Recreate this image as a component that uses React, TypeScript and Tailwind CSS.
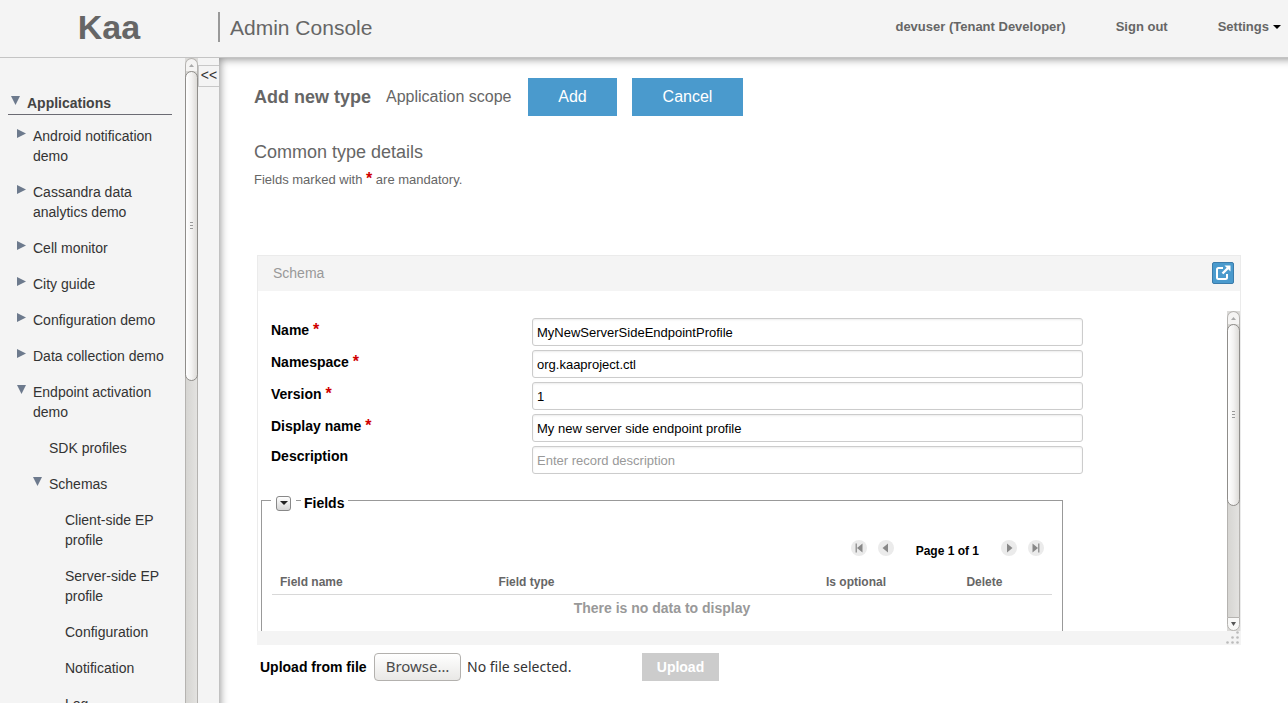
import { useRef } from "react";

type Arrow = "down" | "right" | "up" | "left";

const POINTS: Record<Arrow, string> = {
  down: "0,0 9,0 4.5,9",
  right: "0,0 9,4.5 0,9",
  up: "0,9 9,9 4.5,0",
  left: "9,0 9,9 0,4.5",
};

function Triangle({ dir, className }: { dir: Arrow; className: string }) {
  return (
    <svg viewBox="0 0 9 9" preserveAspectRatio="none" className={className} aria-hidden="true">
      <polygon points={POINTS[dir]} fill="currentColor" />
    </svg>
  );
}

type Node = { label: string; level: 1 | 2 | 3; arrow?: "down" | "right" };

const NODES: Node[] = [
  { label: "Android notification demo", level: 1, arrow: "right" },
  { label: "Cassandra data analytics demo", level: 1, arrow: "right" },
  { label: "Cell monitor", level: 1, arrow: "right" },
  { label: "City guide", level: 1, arrow: "right" },
  { label: "Configuration demo", level: 1, arrow: "right" },
  { label: "Data collection demo", level: 1, arrow: "right" },
  { label: "Endpoint activation demo", level: 1, arrow: "down" },
  { label: "SDK profiles", level: 2 },
  { label: "Schemas", level: 2, arrow: "down" },
  { label: "Client-side EP profile", level: 3 },
  { label: "Server-side EP profile", level: 3 },
  { label: "Configuration", level: 3 },
  { label: "Notification", level: 3 },
  { label: "Log", level: 3 },
];

const INDENT = { 1: "pl-[17px]", 2: "pl-[33px]", 3: "pl-[49px]" };

function TreeRow({ node }: { node: Node }) {
  return (
    <li className={`flex py-2 pr-4 ${INDENT[node.level]}`}>
      <div className="w-4 shrink-0">
        {node.arrow && (
          <button type="button" aria-label={`Toggle ${node.label}`} className="block pt-[3px] text-[#6d7a8d]">
            <Triangle dir={node.arrow} className="size-[9px]" />
          </button>
        )}
      </div>
      <a href="#" className="text-sm text-[#333]">
        {node.label}
      </a>
    </li>
  );
}

function ScrollBar({ thumb, end }: { thumb: string; end?: boolean }) {
  return (
    <div className="flex w-[13px] shrink-0 flex-col bg-[#dcdbd9]" aria-hidden="true">
      <div className="flex h-[13px] items-center justify-center rounded-t-full border border-b-0 border-[#b5b3b0] bg-[#f5f4f3] text-[#aaa]">
        <Triangle dir="up" className="h-[3px] w-[5px]" />
      </div>
      <div className="min-h-0 flex-1 border-x border-[#b5b3b0] bg-linear-to-r from-[#d6d5d2] to-[#e3e2e0]">
        <div
          className={`-mx-px flex flex-col items-center justify-center gap-[2px] rounded-full border border-[#8f8d8a] bg-linear-to-r from-white via-[#f3f2f1] to-[#dddbd8] ${thumb}`}
        >
          <div className="h-px w-[3px] bg-[#999]" />
          <div className="h-px w-[3px] bg-[#999]" />
          <div className="h-px w-[3px] bg-[#999]" />
        </div>
      </div>
      {end && (
        <div className="flex h-[14px] items-center justify-center rounded-b-full border border-[#b5b3b0] bg-[#f8f8f7] text-[#555]">
          <Triangle dir="down" className="h-1 w-[5px]" />
        </div>
      )}
    </div>
  );
}

function Star() {
  return <span className="text-base leading-4 font-bold text-[#d00000]">*</span>;
}

type Field = { id: string; label: string; value?: string; placeholder?: string; required?: boolean };

const FIELDS: Field[] = [
  { id: "name", label: "Name", value: "MyNewServerSideEndpointProfile", required: true },
  { id: "namespace", label: "Namespace", value: "org.kaaproject.ctl", required: true },
  { id: "version", label: "Version", value: "1", required: true },
  { id: "display-name", label: "Display name", value: "My new server side endpoint profile", required: true },
  { id: "description", label: "Description", placeholder: "Enter record description" },
];

function PagerButton({ label, dir, bar }: { label: string; dir: "left" | "right"; bar?: boolean }) {
  return (
    <button type="button" aria-label={label} className="rounded-full">
      <svg viewBox="0 0 16 16" className="size-4">
        <circle cx="8" cy="8" r="8" fill="#ebebeb" />
        {dir === "left" && <polygon points={bar ? "11.5,3.5 11.5,12.5 6,8" : "10,3.5 10,12.5 4.5,8"} fill="#888" />}
        {dir === "right" && <polygon points={bar ? "4.5,3.5 4.5,12.5 10,8" : "6,3.5 6,12.5 11.5,8"} fill="#888" />}
        {bar && <rect x={dir === "left" ? 4.5 : 10} y="3.5" width="1.5" height="9" fill="#999" />}
      </svg>
    </button>
  );
}

function FieldsTable() {
  return (
    <table className="w-full table-fixed border-collapse">
      <thead>
        <tr className="h-[23px] border-b border-[#d8d8d8] text-left text-xs text-[#666]">
          <th className="w-[28%] px-2">Field name</th>
          <th className="w-[42%] px-2">Field type</th>
          <th className="w-[18%] px-2">Is optional</th>
          <th className="px-2">Delete</th>
        </tr>
      </thead>
      <tbody>
        <tr>
          <td colSpan={4} className="pt-[3px] text-center text-sm font-bold text-[#999]">
            There is no data to display
          </td>
        </tr>
      </tbody>
    </table>
  );
}

function SchemaPanel() {
  return (
    <section className="mr-[47px] ml-[3px] border-x border-t border-[#ebebeb]">
      <header className="flex h-[35px] items-center justify-between bg-[#f4f4f4] pr-[6px] pb-[2px] pl-[15px]">
        <h3 className="text-sm text-[#999]">Schema</h3>
        <button
          type="button"
          aria-label="Full screen"
          className="flex size-[22px] items-center justify-center rounded-[2px] border border-[#3b7cab] bg-[#4a9acd]"
        >
          <svg viewBox="0 0 16 16" className="size-4" fill="none" stroke="#fff" strokeWidth="2">
            <path d="M8 3H3.500Q2 3 2 4.500V12.500Q2 14 3.500 14H10.500Q12 14 12 12.500V9" />
            <path d="M7.500 8.500L13 3" strokeWidth="2.400" />
            <path d="M9.500 0.500H15.500V6.500Z" fill="#fff" stroke="none" />
          </svg>
        </button>
      </header>
      <div className="flex h-[340px] pt-5">
        <div className="min-w-0 flex-1 overflow-hidden pt-[7px] pl-[3px]">
          <div className="flex flex-col gap-1 pl-[10px]">
            {FIELDS.map((f) => (
              <div key={f.id} className="flex">
                <label
                  htmlFor={f.id}
                  className={`w-[261px] shrink-0 text-sm font-bold text-black ${f.required ? "pt-[2px]" : ""}`}
                >
                  {f.label} {f.required && <Star />}
                </label>
                <input
                  id={f.id}
                  type="text"
                  defaultValue={f.value}
                  placeholder={f.placeholder}
                  className="h-7 w-full max-w-[551px] rounded-[3px] border border-[#ccc] bg-white px-1 text-[13px] text-black shadow-[inset_0_1px_2px_rgba(0,0,0,0.08)] placeholder:text-[#999]"
                />
              </div>
            ))}
          </div>
          <fieldset className="mt-4 h-60 w-full max-w-[802px] border border-[#999] px-[10px]">
            <legend className="-ml-px flex h-5 items-center bg-white pt-[6px] pr-[4px] pl-[5px] text-sm leading-[14px] font-bold text-black">
              <button
                type="button"
                aria-label="Toggle fields"
                className="flex size-[15px] items-center justify-center rounded-[3px] border border-[#888] bg-linear-to-b from-white to-[#d5d5d5] text-[#222]"
              >
                <Triangle dir="down" className="h-1 w-2" />
              </button>
              <span className="mt-1 mr-[3px] ml-[5px] w-[5px] self-start border-t border-[#999]" />
              Fields
            </legend>
            <div className="flex items-center justify-end pt-[27px] pr-2 pb-3">
              <div className="flex gap-[11px]">
                <PagerButton label="First page" dir="left" bar />
                <PagerButton label="Previous page" dir="left" />
              </div>
              <span className="mx-[22px] pt-[6px] text-xs font-bold text-black">Page 1 of 1</span>
              <div className="flex gap-[11px]">
                <PagerButton label="Next page" dir="right" />
                <PagerButton label="Last page" dir="right" bar />
              </div>
            </div>
            <FieldsTable />
          </fieldset>
        </div>
        <ScrollBar thumb="h-[62%]" end />
      </div>
      <footer className="-mx-px flex h-[14px] items-start justify-end bg-[#f4f4f4] pr-[2px]">
        <svg viewBox="0 0 13 13" className="size-[13px]" fill="#bbb" aria-hidden="true">
          <circle cx="11.500" cy="1.500" r="1.300" />
          <circle cx="11.500" cy="6.500" r="1.300" />
          <circle cx="6.500" cy="6.500" r="1.300" />
          <circle cx="11.500" cy="11.500" r="1.300" />
          <circle cx="6.500" cy="11.500" r="1.300" />
          <circle cx="1.500" cy="11.500" r="1.300" />
        </svg>
      </footer>
    </section>
  );
}

function UploadRow() {
  const file = useRef<HTMLInputElement>(null);
  return (
    <div className="flex items-center pt-2 pl-[6px]">
      <label htmlFor="schema-file" className="min-w-[114px] text-sm font-bold text-black">
        Upload from file
      </label>
      <input ref={file} id="schema-file" type="file" className="hidden" />
      <div className="flex w-[268px] items-center gap-[6px] font-['Noto_Sans','Open_Sans',sans-serif] text-sm">
        <button
          type="button"
          onClick={() => file.current?.click()}
          className="h-7 w-[87px] rounded-[4px] border border-[#b3b1ae] bg-linear-to-b from-white to-[#e9e8e6] text-[15px] text-[#4c4c4c]"
        >
          Browse…
        </button>
        <span className="text-[#333]">No file selected.</span>
      </div>
      <button type="button" disabled className="h-7 w-[77px] bg-[#ccc] text-sm font-bold text-white">
        Upload
      </button>
    </div>
  );
}

export default function App() {
  return (
    <div className="flex h-screen flex-col overflow-hidden bg-white font-['Liberation_Sans',Arial,sans-serif] text-[#666]">
      <header className="flex h-[58px] shrink-0 items-center border-b border-[#c4c4c4] bg-[#f4f4f4] pb-[3px]">
        <div className="w-[218px] text-center text-[34px] leading-10 font-bold">Kaa</div>
        <div className="flex h-[30px] items-center border-l-2 border-[#999] pt-[2px] pl-[10px] text-[21px]">
          Admin Console
        </div>
        <nav className="ml-auto flex items-center gap-[50px] pr-[7px] text-[13px] font-bold">
          <a href="#">devuser (Tenant Developer)</a>
          <a href="#">Sign out</a>
          <button type="button" className="flex items-center gap-1">
            Settings
            <Triangle dir="down" className="h-1 w-2 text-black" />
          </button>
        </nav>
      </header>
      <div className="flex min-h-0 flex-1">
        <aside className="flex shrink-0 bg-[#f4f4f4]">
          <nav className="w-[185px] overflow-hidden pt-[34px]">
            <div className="mr-[13px] mb-[3px] ml-2 flex h-[23px] border-b border-[#6b6b73] pl-[3px]">
              <button type="button" aria-label="Toggle applications" className="flex w-4 items-start pt-1 text-[#6d7a8d]">
                <Triangle dir="down" className="size-[9px]" />
              </button>
              <a href="#" className="pt-[1px] text-sm font-bold text-[#444]">
                Applications
              </a>
            </div>
            <ul>
              {NODES.map((n, i) => (
                <TreeRow key={i} node={n} />
              ))}
            </ul>
          </nav>
          <ScrollBar thumb="h-[49%]" />
          <div className="w-[21px] pt-[5px]">
            <button type="button" className="h-[22px] w-full border border-r-0 border-[#c8c8c8] pb-[2px] text-sm leading-[18px] text-[#333]">
              {"<<"}
            </button>
          </div>
        </aside>
        <main className="min-w-0 flex-1 overflow-hidden pt-5 pl-[35px] shadow-[inset_6px_6px_8px_-5px_rgba(0,0,0,0.45)]">
          <div className="flex items-center gap-[15px]">
            <h1 className="text-lg font-bold">Add new type</h1>
            <span className="min-w-[127px]">Application scope</span>
            <button type="button" className="h-[38px] w-[89px] bg-[#4a9acd] text-white">
              Add
            </button>
            <button type="button" className="h-[38px] w-[111px] bg-[#4a9acd] text-white">
              Cancel
            </button>
          </div>
          <h2 className="pt-[22px] text-lg">Common type details</h2>
          <p className="pt-1 pb-[65px] text-[13px] leading-5">
            Fields marked with <Star /> are mandatory.
          </p>
          <SchemaPanel />
          <UploadRow />
        </main>
      </div>
    </div>
  );
}
